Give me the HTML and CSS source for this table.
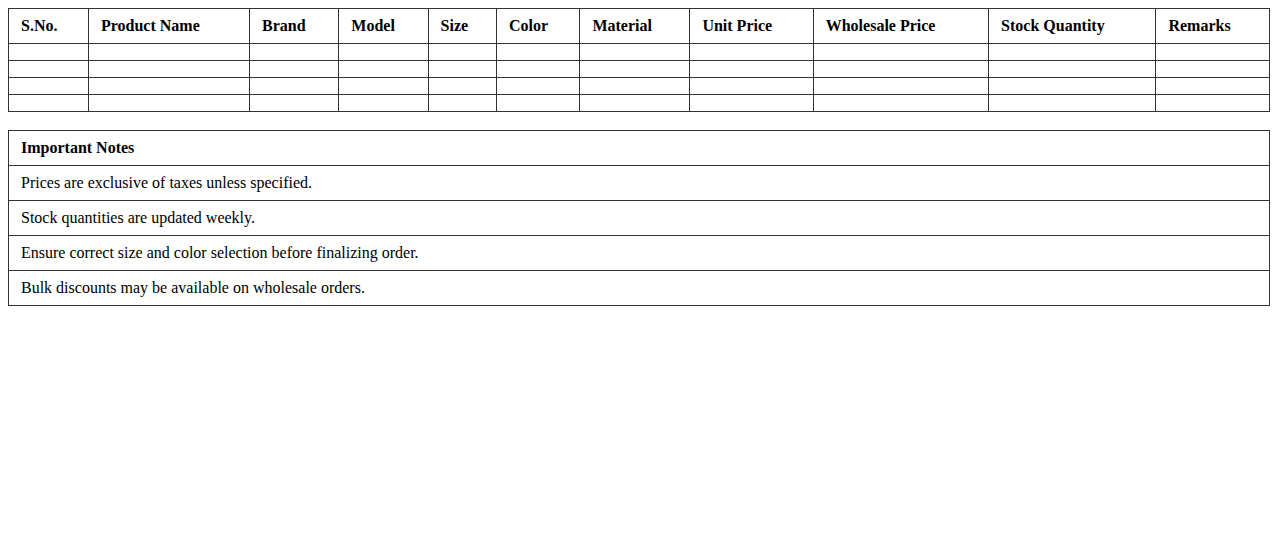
FILE: index.html
```html
<!DOCTYPE html>
<html>
<head>
<meta charset="utf-8">
<link rel="stylesheet" href="styles.css">
</head>
<body>
<table class="grid">
  <thead>
    <tr>
      <th>S.No.</th><th>Product Name</th><th>Brand</th><th>Model</th><th>Size</th><th>Color</th><th>Material</th><th>Unit Price</th><th>Wholesale Price</th><th>Stock Quantity</th><th>Remarks</th>
    </tr>
  </thead>
  <tbody>
    <tr><td></td><td></td><td></td><td></td><td></td><td></td><td></td><td></td><td></td><td></td><td></td></tr>
    <tr><td></td><td></td><td></td><td></td><td></td><td></td><td></td><td></td><td></td><td></td><td></td></tr>
    <tr><td></td><td></td><td></td><td></td><td></td><td></td><td></td><td></td><td></td><td></td><td></td></tr>
    <tr><td></td><td></td><td></td><td></td><td></td><td></td><td></td><td></td><td></td><td></td><td></td></tr>
  </tbody>
</table>
<table class="notes">
  <thead><tr><th>Important Notes</th></tr></thead>
  <tbody>
    <tr><td>Prices are exclusive of taxes unless specified.</td></tr>
    <tr><td>Stock quantities are updated weekly.</td></tr>
    <tr><td>Ensure correct size and color selection before finalizing order.</td></tr>
    <tr><td>Bulk discounts may be available on wholesale orders.</td></tr>
  </tbody>
</table>
</body>
</html>
```
FILE: styles.css
```css
body {
  margin: 8px;
  font-family: "Liberation Serif", "Times New Roman", serif;
  font-size: 16px;
  color: #000;
  background: #fff;
}
table {
  width: 100%;
  border-collapse: collapse;
}
th, td {
  border: 1px solid #333;
  padding: 8px 12px;
  text-align: left;
}
th {
  font-weight: bold;
}
.grid {
  margin-bottom: 18px;
}
```
